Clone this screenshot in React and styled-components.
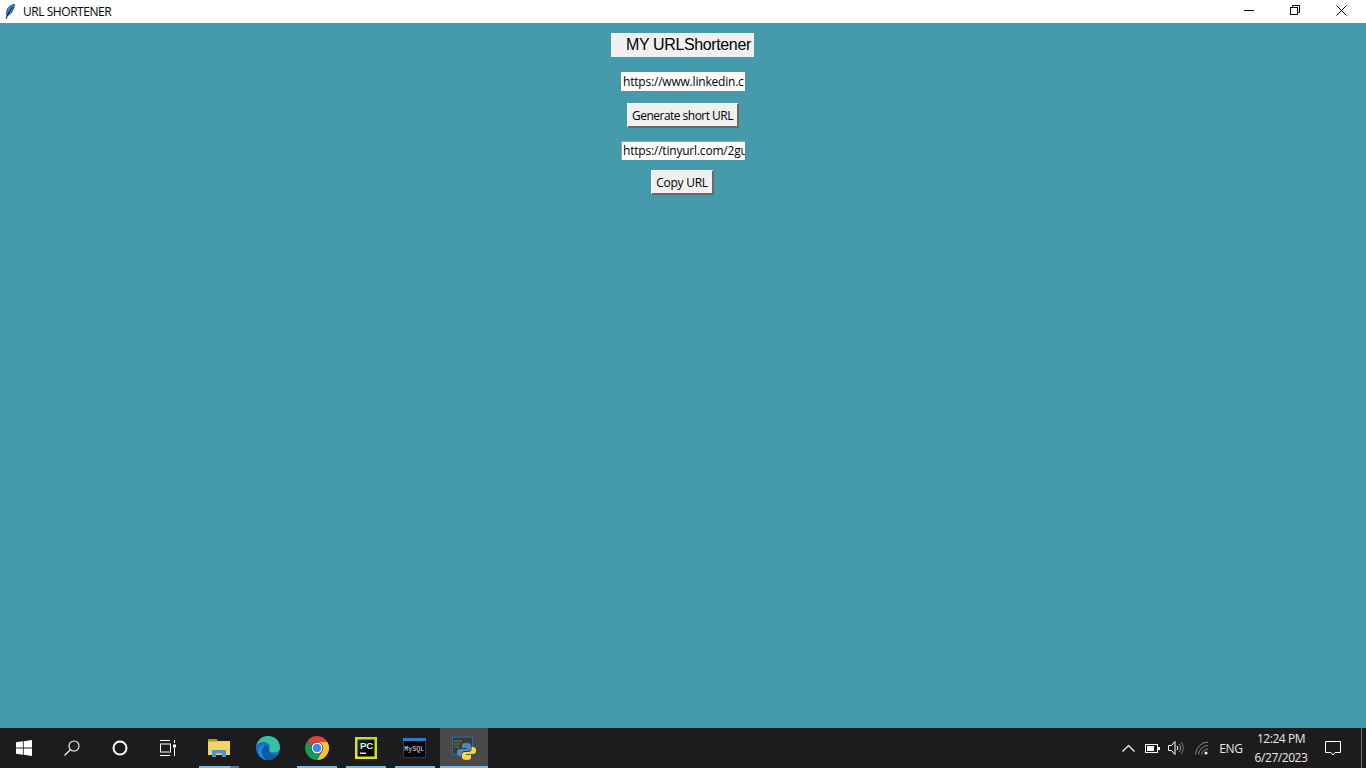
import React from "react";
import styled, { createGlobalStyle } from "styled-components";

const Global = createGlobalStyle`
  html, body { margin: 0; padding: 0; height: 100%; overflow: hidden; }
  #root { height: 100%; }
`;

const Screen = styled.div`
  height: 768px;
  display: flex;
  flex-direction: column;
  font-family: "Open Sans", "Noto Sans", sans-serif;
`;

const TitleBar = styled.header`
  height: 23px;
  flex: none;
  background: #fff;
  display: flex;
  align-items: center;
  justify-content: space-between;
`;
const TitleLeft = styled.div`
  display: flex;
  align-items: center;
  padding-left: 5px;
  gap: 8px;
`;
const TitleText = styled.span`
  font-size: 12px;
  letter-spacing: -0.45px;
  color: #000;
`;
const WindowControls = styled.div`
  display: flex;
  height: 100%;
  padding-right: 2px;
`;
const WindowButton = styled.div`
  width: 46px;
  height: 100%;
  display: flex;
  align-items: center;
  justify-content: center;
  padding-bottom: 3px;
  box-sizing: border-box;
`;

const Main = styled.main`
  flex: 1;
  background: #459aab;
  display: flex;
  flex-direction: column;
  align-items: center;
  padding-top: 10px;
`;
const Heading = styled.div`
  width: 143px;
  height: 24px;
  margin-right: 1px;
  box-sizing: border-box;
  background: #f0f0f0;
  padding-left: 15px;
  font: 16px/24px "Liberation Sans", Arial, sans-serif;
  letter-spacing: -0.37px;
  color: #000;
  white-space: nowrap;
`;
const Entry = styled.div`
  width: 124px;
  height: 19px;
  box-sizing: border-box;
  margin-top: ${(p) => p.$top}px;
  background: #fff;
  padding-left: 1px;
  font-size: 12px;
  line-height: 17px;
  letter-spacing: -0.2px;
  color: #000;
  white-space: nowrap;
  overflow: hidden;
  border-top: 1px solid ${(p) => p.$edge || "#fff"};
  border-left: 1px solid ${(p) => p.$edge || "#fff"};
`;
const TkButton = styled.button`
  width: ${(p) => p.$w}px;
  height: 25px;
  margin-top: ${(p) => p.$top}px;
  margin-right: ${(p) => p.$nudge || 0}px;
  padding: 0;
  box-sizing: border-box;
  background: #f0f0f0;
  border: none;
  border-top: 1px solid #fff;
  border-left: 1px solid #fff;
  border-right: 2px solid #696969;
  border-bottom: 2px solid #696969;
  font-family: "Open Sans", "Noto Sans", sans-serif;
  font-size: 12px;
  letter-spacing: ${(p) => p.$track}px;
  color: #000;
  white-space: nowrap;
`;

const Taskbar = styled.footer`
  height: 40px;
  flex: none;
  background: #1c1c1c;
  display: flex;
  justify-content: space-between;
`;
const TaskLeft = styled.div`
  display: flex;
`;
const SystemButton = styled.div`
  width: 48px;
  height: 40px;
  display: flex;
  align-items: center;
  justify-content: center;
`;
const AppList = styled.div`
  display: flex;
  margin-left: 2px;
`;
const AppButton = styled.div`
  position: relative;
  width: ${(p) => (p.$active ? 48 : 49)}px;
  margin-left: ${(p) => (p.$active ? 1 : 0)}px;
  height: 40px;
  display: flex;
  align-items: center;
  justify-content: center;
  background: ${(p) => (p.$active ? "#4a4a4a" : "transparent")};
`;
const Underline = styled.span`
  position: absolute;
  bottom: 0;
  height: 2px;
  left: ${(p) => (p.$active ? 0 : 5)}px;
  right: ${(p) => (p.$active ? 0 : 4)}px;
  background: ${(p) =>
    p.$stacked ? "linear-gradient(to right, #76b9ed 31px, #4f7f9f 31px)" : "#76b9ed"};
`;
const Tray = styled.div`
  display: flex;
  align-items: center;
  color: #fff;
`;
const TrayIcon = styled.div`
  width: ${(p) => p.$w}px;
  height: 40px;
  display: flex;
  align-items: center;
  justify-content: center;
`;
const TrayLabel = styled.div`
  width: 30px;
  text-align: center;
  font-size: 12px;
  letter-spacing: -0.3px;
  color: #e8e8e8;
`;
const Clock = styled.div`
  width: 70px;
  text-align: center;
  font-size: 12px;
  line-height: 19px;
  letter-spacing: -0.45px;
  color: #e8e8e8;
`;
const ShowDesktop = styled.div`
  width: 4px;
  height: 40px;
  margin-left: 11px;
  border-left: 1px solid #6a6a6a;
`;

const Feather = () => (
  <svg width="10" height="15" viewBox="0 0 10 15">
    <path d="M9.500.5C6 .5 2.500 3.500 1.800 7.500c-.3 1.600-.2 3 .2 4.200C5.500 11 9 6 9.500.5z" fill="#3f8fe6" stroke="#12284f" strokeWidth=".8" />
    <path d="M7.500 3C5 6 3 9.500 1 14.500" stroke="#0d1a36" strokeWidth="1.100" fill="none" />
  </svg>
);
const Minimize = () => (
  <svg width="10" height="10" viewBox="0 0 10 10"><path d="M0 5.500h10" stroke="#000" /></svg>
);
const Restore = () => (
  <svg width="10" height="10" viewBox="0 0 10 10" fill="none" stroke="#000">
    <rect x=".5" y="2.500" width="7" height="7" /><path d="M2.500 2.500v-2h7v7h-2" />
  </svg>
);
const CloseIcon = () => (
  <svg width="11" height="11" viewBox="0 0 11 11"><path d="M.5.500l10 10M10.500.500l-10 10" stroke="#000" /></svg>
);

const WindowsLogo = () => (
  <svg width="16" height="16" viewBox="0 0 16 16" fill="#fff">
    <path d="M0 2.300L6.900 1.300V7.600H0zM7.700 1.200L16 0V7.600H7.700zM0 8.400H6.900V14.700L0 13.700zM7.700 8.400H16V16L7.700 14.800z" />
  </svg>
);
const SearchIcon = () => (
  <svg width="16" height="16" viewBox="0 0 16 16" fill="none" stroke="#fff" strokeWidth="1.100">
    <circle cx="10" cy="6" r="5" /><path d="M6.500 9.500L.5 15.500" />
  </svg>
);
const CortanaIcon = () => (
  <svg width="16" height="16" viewBox="0 0 16 16" fill="none" stroke="#fff" strokeWidth="2">
    <circle cx="8" cy="8" r="6.500" />
  </svg>
);
const TaskViewIcon = () => (
  <svg width="16" height="16" viewBox="0 0 16 16" fill="none" stroke="#fff" strokeWidth="1">
    <path d="M0 .500h10M0 15.500h10" />
    <rect x=".5" y="4" width="10" height="8" />
    <path d="M14.500 0v3M14.500 8v8" />
    <rect x="13" y="4.500" width="3" height="3" fill="#fff" stroke="none" />
  </svg>
);
const ExplorerIcon = () => (
  <svg width="22" height="18" viewBox="0 0 22 18">
    <path d="M0 0h8l2 2h12v3H0z" fill="#d69a1e" />
    <rect x="0" y="2" width="22" height="14" fill="#f6d365" />
    <rect x="0" y="0" width="9" height="2.500" fill="#c98a16" />
    <path d="M4 11h14v7h-4v-3.500H8V18H4z" fill="#4a95d6" />
  </svg>
);
const EdgeIcon = () => (
  <svg width="24" height="24" viewBox="0 0 24 24">
    <circle cx="12" cy="12" r="12" fill="#1b6fc2" />
    <path d="M.3 10C1.500 4 6 0 12 0c7 0 12 5 12 11.500 0 3.500-3 5-6 5s-5-1-5-2.500c0-1 .8-1.500.8-2.800C13.800 8 10.500 6 7 6 4 6 1.500 7.500.3 10z" fill="#35c1a0" />
    <path d="M13 14c0 4 4 6 8 5a12 12 0 0 1-9 5c-5 0-9-3-10.500-7C1 12 4 9 8 9c3 0 5 2 5 5z" fill="#0c59a4" />
    <path d="M8 9c-3.500 0-6 2.500-6 6 0 4 3.500 8 8 9-2.500-2-4-5-4-8 0-3 1-5.500 3.500-6.500C9 9.200 8.500 9 8 9z" fill="#1d86d8" />
  </svg>
);
const ChromeIcon = () => (
  <svg width="24" height="24" viewBox="0 0 24 24">
    <path d="M12 0a12 12 0 0 1 10.400 6H12a6 6 0 0 0-5.500 3.500L2.400 5A12 12 0 0 1 12 0z" fill="#db4437" />
    <path d="M22.400 6A12 12 0 0 1 12 24l4.800-8.500A6 6 0 0 0 17 8.500 6 6 0 0 0 12 6z" fill="#fbc02d" />
    <path d="M12 24A12 12 0 0 1 2.400 5l4.100 4.500a6 6 0 0 0 .3 5.500 6 6 0 0 0 10 .5z" fill="#0f9d58" />
    <circle cx="12" cy="12" r="5.500" fill="#fff" />
    <circle cx="12" cy="12" r="4.300" fill="#4285f4" />
  </svg>
);
const PyCharmIcon = () => (
  <svg width="22" height="22" viewBox="0 0 22 22">
    <defs>
      <linearGradient id="pcEdge" x1="0" y1="1" x2="1" y2="0">
        <stop offset="0" stopColor="#f2e422" />
        <stop offset="1" stopColor="#b7dc25" />
      </linearGradient>
      <linearGradient id="pcFill" x1="0" y1="0" x2="1" y2="1">
        <stop offset="0" stopColor="#0c3a24" />
        <stop offset=".6" stopColor="#050505" />
      </linearGradient>
    </defs>
    <rect width="22" height="22" fill="url(#pcEdge)" />
    <rect x="2.500" y="2.500" width="17" height="17" fill="url(#pcFill)" />
    <rect x="5" y="15.500" width="6" height="1.500" fill="#ddd" />
    <text x="5" y="12" fontSize="9.500" fontWeight="700" fill="#e8f5e8" fontFamily="Liberation Sans">PC</text>
  </svg>
);
const MySqlIcon = () => (
  <svg width="23" height="20" viewBox="0 0 23 20">
    <rect width="23" height="20" fill="#15406e" />
    <rect x="0" y="0" width="23" height="3" fill="#2a7bc8" />
    <rect x="1" y="3" width="21" height="16" fill="#030308" />
    <text x="1.200" y="13" fontSize="6.500" fill="#e6e6e6" fontFamily="Liberation Mono" textLength="20">MySQL</text>
  </svg>
);
const PythonIcon = () => (
  <svg width="24" height="24" viewBox="0 0 24 24">
    <rect x=".5" y="1" width="20" height="17" fill="#3a3a3a" stroke="#2a6ba8" />
    <path d="M2 5h8M2 8h6M2 11h5" stroke="#5a8f4a" />
    <path d="M14 7c-3 0-4 1-4 2.500V12h5v1H8c-2 0-3 1.500-3 3.500S6 20 8 20h1.500v-2.500c0-1.500 1.500-2.500 3-2.500h4c1.500 0 2.500-1 2.500-2.500v-3C19 8 17.500 7 14 7z" fill="#4b8bbe" />
    <path d="M15 24c3 0 4-1 4-2.500V19h-5v-1h7c2 0 3-1.500 3-3.500S23 11 21 11h-1.500v2.500c0 1.500-1.500 2.500-3 2.500h-4c-1.500 0-2.500 1-2.500 2.500v3C10 23 11.500 24 15 24z" fill="#ffd43b" />
  </svg>
);
const Chevron = () => (
  <svg width="13" height="8" viewBox="0 0 13 8" fill="none" stroke="#fff" strokeWidth="1.200"><path d="M.5 7.500l6-6 6 6" /></svg>
);
const Battery = () => (
  <svg width="15" height="9" viewBox="0 0 15 9">
    <rect x=".5" y=".5" width="12" height="8" fill="none" stroke="#fff" />
    <rect x="2" y="2" width="7" height="5" fill="#fff" />
    <rect x="13" y="3" width="2" height="3" fill="#fff" />
  </svg>
);
const Volume = () => (
  <svg width="16" height="14" viewBox="0 0 16 14" fill="none" stroke="#fff">
    <path d="M.5 4.500h3l3.500-4v13l-3.500-4h-3z" />
    <path d="M9 5a3 3 0 0 1 0 4" />
    <path d="M11 3a6 6 0 0 1 0 8" stroke="#999" />
    <path d="M13 1a9 9 0 0 1 0 12" stroke="#777" />
  </svg>
);
const Wifi = () => (
  <svg width="14" height="14" viewBox="0 0 14 14" fill="none" stroke="#888">
    <path d="M.5 13.500A13 13 0 0 1 13 1" />
    <path d="M3.500 13.500A10 10 0 0 1 13 4.500" />
    <path d="M6.500 13.500A7 7 0 0 1 13 8" />
    <circle cx="11" cy="12" r="1.500" fill="#fff" stroke="none" />
  </svg>
);
const Notification = () => (
  <svg width="16" height="16" viewBox="0 0 16 16" fill="none" stroke="#fff">
    <path d="M.5 1.500h15v11H10l-2 2.500-2-2.500H.5z" />
  </svg>
);

const apps = [
  { id: "explorer", Icon: ExplorerIcon, line: true, stacked: true },
  { id: "edge", Icon: EdgeIcon, line: false },
  { id: "chrome", Icon: ChromeIcon, line: true },
  { id: "pycharm", Icon: PyCharmIcon, line: true },
  { id: "mysql", Icon: MySqlIcon, line: true },
  { id: "python", Icon: PythonIcon, line: true, active: true },
];

export default function App() {
  return (
    <Screen>
      <Global />
      <TitleBar>
        <TitleLeft>
          <Feather />
          <TitleText>URL SHORTENER</TitleText>
        </TitleLeft>
        <WindowControls>
          <WindowButton><Minimize /></WindowButton>
          <WindowButton><Restore /></WindowButton>
          <WindowButton><CloseIcon /></WindowButton>
        </WindowControls>
      </TitleBar>
      <Main>
        <Heading>MY URLShortener</Heading>
        <Entry $top={15}>https://www.linkedin.c</Entry>
        <TkButton $w={112} $top={12} $track={-0.52}>Generate short URL</TkButton>
        <Entry $top={13} $edge="#a0a0a0">https://tinyurl.com/2gu</Entry>
        <TkButton $w={63} $top={10} $nudge={1} $track={-0.25}>Copy URL</TkButton>
      </Main>
      <Taskbar>
        <TaskLeft>
          <SystemButton><WindowsLogo /></SystemButton>
          <SystemButton><SearchIcon /></SystemButton>
          <SystemButton><CortanaIcon /></SystemButton>
          <SystemButton><TaskViewIcon /></SystemButton>
          <AppList>
            {apps.map(({ id, Icon, line, active, stacked }) => (
              <AppButton key={id} $active={active}>
                <Icon />
                {line && <Underline $active={active} $stacked={stacked} />}
              </AppButton>
            ))}
          </AppList>
        </TaskLeft>
        <Tray>
          <TrayIcon $w={24}><Chevron /></TrayIcon>
          <TrayIcon $w={24}><Battery /></TrayIcon>
          <TrayIcon $w={24}><Volume /></TrayIcon>
          <TrayIcon $w={28}><Wifi /></TrayIcon>
          <TrayLabel>ENG</TrayLabel>
          <Clock>12:24 PM<br />6/27/2023</Clock>
          <TrayIcon $w={34}><Notification /></TrayIcon>
          <ShowDesktop />
        </Tray>
      </Taskbar>
    </Screen>
  );
}
